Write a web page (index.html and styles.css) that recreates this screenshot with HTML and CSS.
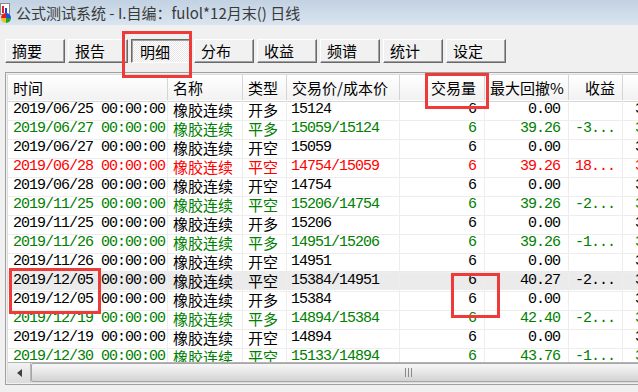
FILE: index.html
```html
<!DOCTYPE html>
<html lang="zh-CN">
<head>
    <meta charset="UTF-8">
    <meta name="viewport" content="width=device-width, initial-scale=1.0">
    <title>公式测试系统</title>
    <link rel="stylesheet" href="styles.css">
</head>
<body>
    <div class="titlebar">
        <svg class="app-icon" width="13" height="20" viewBox="0 0 13 20">
            <rect x="0.5" y="0.5" width="9" height="11" fill="#fff" stroke="#8a8a8a"/>
            <rect x="2" y="3" width="2" height="7" fill="#e02020"/>
            <rect x="5" y="5" width="2" height="5" fill="#2040d0"/>
            <path d="M6 15 L6 10 A5 5 0 0 0 1 15 Z" fill="#e02020"/>
            <path d="M6 15 L11 15 A5 5 0 0 0 6 10 Z" fill="#2050e0"/>
            <path d="M6 15 L6 20 A5 5 0 0 0 11 15 Z" fill="#20a030"/>
            <path d="M6 15 L1 15 A5 5 0 0 0 6 20 Z" fill="#f0c020"/>
        </svg>
        <span class="title">公式测试系统 - I.自编：fulol*12月末() 日线</span>
    </div>

    <div class="tabs">
        <button class="tab">摘要</button>
        <button class="tab">报告</button>
        <button class="tab active">明细</button>
        <button class="tab">分布</button>
        <button class="tab">收益</button>
        <button class="tab">频谱</button>
        <button class="tab">统计</button>
        <button class="tab">设定</button>
    </div>

    <div class="list">
        <div class="list-inner">
            <div class="grid">
                <div class="row head">
                    <div class="cell">时间</div>
                    <div class="cell">名称</div>
                    <div class="cell">类型</div>
                    <div class="cell">交易价/成本价</div>
                    <div class="cell right">交易量</div>
                    <div class="cell right dd">最大回撤%</div>
                    <div class="cell right pl">收益</div>
                    <div class="cell"></div>
                </div>

                <div class="row">
                    <div class="cell mono">2019/06/25 00:00:00</div><div class="cell">橡胶连续</div><div class="cell">开多</div>
                    <div class="cell mono price">15124</div><div class="cell mono right">6</div><div class="cell mono right">0.00</div>
                    <div class="cell mono pl"></div><div class="cell mono last">3</div>
                </div>
                <div class="row green">
                    <div class="cell mono">2019/06/27 00:00:00</div><div class="cell">橡胶连续</div><div class="cell">平多</div>
                    <div class="cell mono price">15059/15124</div><div class="cell mono right">6</div><div class="cell mono right">39.26</div>
                    <div class="cell mono pl">-3...</div><div class="cell mono last">3</div>
                </div>
                <div class="row">
                    <div class="cell mono">2019/06/27 00:00:00</div><div class="cell">橡胶连续</div><div class="cell">开空</div>
                    <div class="cell mono price">15059</div><div class="cell mono right">6</div><div class="cell mono right">0.00</div>
                    <div class="cell mono pl"></div><div class="cell mono last">3</div>
                </div>
                <div class="row red">
                    <div class="cell mono">2019/06/28 00:00:00</div><div class="cell">橡胶连续</div><div class="cell">平空</div>
                    <div class="cell mono price">14754/15059</div><div class="cell mono right">6</div><div class="cell mono right">39.26</div>
                    <div class="cell mono pl">18...</div><div class="cell mono last">3</div>
                </div>
                <div class="row">
                    <div class="cell mono">2019/06/28 00:00:00</div><div class="cell">橡胶连续</div><div class="cell">开空</div>
                    <div class="cell mono price">14754</div><div class="cell mono right">6</div><div class="cell mono right">0.00</div>
                    <div class="cell mono pl"></div><div class="cell mono last">3</div>
                </div>
                <div class="row green">
                    <div class="cell mono">2019/11/25 00:00:00</div><div class="cell">橡胶连续</div><div class="cell">平空</div>
                    <div class="cell mono price">15206/14754</div><div class="cell mono right">6</div><div class="cell mono right">39.26</div>
                    <div class="cell mono pl">-2...</div><div class="cell mono last">3</div>
                </div>
                <div class="row">
                    <div class="cell mono">2019/11/25 00:00:00</div><div class="cell">橡胶连续</div><div class="cell">开多</div>
                    <div class="cell mono price">15206</div><div class="cell mono right">6</div><div class="cell mono right">0.00</div>
                    <div class="cell mono pl"></div><div class="cell mono last">3</div>
                </div>
                <div class="row green">
                    <div class="cell mono">2019/11/26 00:00:00</div><div class="cell">橡胶连续</div><div class="cell">平多</div>
                    <div class="cell mono price">14951/15206</div><div class="cell mono right">6</div><div class="cell mono right">39.26</div>
                    <div class="cell mono pl">-1...</div><div class="cell mono last">3</div>
                </div>
                <div class="row">
                    <div class="cell mono">2019/11/26 00:00:00</div><div class="cell">橡胶连续</div><div class="cell">开空</div>
                    <div class="cell mono price">14951</div><div class="cell mono right">6</div><div class="cell mono right">0.00</div>
                    <div class="cell mono pl"></div><div class="cell mono last">3</div>
                </div>
                <div class="row sel">
                    <div class="cell mono">2019/12/05 00:00:00</div><div class="cell">橡胶连续</div><div class="cell">平空</div>
                    <div class="cell mono price">15384/14951</div><div class="cell mono right">6</div><div class="cell mono right">40.27</div>
                    <div class="cell mono pl">-2...</div><div class="cell mono last">3</div>
                </div>
                <div class="row">
                    <div class="cell mono">2019/12/05 00:00:00</div><div class="cell">橡胶连续</div><div class="cell">开多</div>
                    <div class="cell mono price">15384</div><div class="cell mono right">6</div><div class="cell mono right">0.00</div>
                    <div class="cell mono pl"></div><div class="cell mono last">3</div>
                </div>
                <div class="row green">
                    <div class="cell mono">2019/12/19 00:00:00</div><div class="cell">橡胶连续</div><div class="cell">平多</div>
                    <div class="cell mono price">14894/15384</div><div class="cell mono right">6</div><div class="cell mono right">42.40</div>
                    <div class="cell mono pl">-2...</div><div class="cell mono last">3</div>
                </div>
                <div class="row">
                    <div class="cell mono">2019/12/19 00:00:00</div><div class="cell">橡胶连续</div><div class="cell">开空</div>
                    <div class="cell mono price">14894</div><div class="cell mono right">6</div><div class="cell mono right">0.00</div>
                    <div class="cell mono pl"></div><div class="cell mono last">3</div>
                </div>
                <div class="row green">
                    <div class="cell mono">2019/12/30 00:00:00</div><div class="cell">橡胶连续</div><div class="cell">平空</div>
                    <div class="cell mono price">15133/14894</div><div class="cell mono right">6</div><div class="cell mono right">43.76</div>
                    <div class="cell mono pl">-1...</div><div class="cell mono last">3</div>
                </div>
            </div>

            <div class="hscroll">
                <div class="sb-btn"><span class="sb-arrow"></span></div>
                <div class="sb-thumb"><span class="grip"></span></div>
            </div>
        </div>
    </div>

    <!-- red annotation boxes -->
    <div class="mark mark-tab"></div>
    <div class="mark mark-qty"></div>
    <div class="mark mark-date"></div>
    <div class="mark mark-six"></div>
</body>
</html>
```

FILE: styles.css
```css
* {
    box-sizing: border-box;
}

body {
    margin: 0;
    width: 638px;
    height: 392px;
    overflow: hidden;
    position: relative;
    background-color: #f0f0f0;
    font-family: "Noto Sans CJK SC", sans-serif;
}

.titlebar {
    height: 25px;
    display: flex;
    align-items: center;
    background: linear-gradient(#c2d2e2, #d9e4f0);
}

.app-icon {
    flex: none;
    margin-right: 3px;
}

.title {
    font-size: 15px;
    line-height: 25px;
    color: #3a3a3a;
}

.tabs {
    display: flex;
    gap: 3px;
    padding: 14px 0 0 5px;
}

.tab {
    width: 60px;
    height: 24px;
    margin: 0;
    padding: 0 0 0 6px;
    text-align: left;
    font-family: "Noto Sans CJK SC", sans-serif;
    font-size: 15px;
    line-height: 20px;
    color: #000;
    background-color: #f1f1f1;
    border: 1px solid;
    border-color: #fff #696969 #696969 #fff;
    box-shadow: inset -1px -1px #a0a0a0;
}

.tab.active {
    padding: 1px 0 0 8px;
    border-color: #696969 #fff #fff #696969;
    box-shadow: inset 1px 1px #a0a0a0;
    background: repeating-conic-gradient(#fff 0 25%, #e6e6e6 0 50%) 0 0 / 2px 2px;
}

.list {
    margin: 9px 0 0 5px;
    width: 660px;
    height: 313px;
    padding: 1px;
    border: 1px solid #a0a0a0;
}

.list-inner {
    height: 100%;
    display: flex;
    flex-direction: column;
    overflow: hidden;
    background-color: #fff;
    border: 1px solid #dcdcdc;
}

.grid {
    height: 287px;
    overflow: hidden;
}

.row {
    display: grid;
    grid-template-columns: 160px 75px 44px 113px 85px 84px 54px 90px;
    width: 705px;
    height: 19px;
}

.cell {
    padding: 0 5px;
    white-space: nowrap;
    font-size: 15px;
    line-height: 20px;
    border-right: 1px solid #ededed;
    border-bottom: 1px solid #ededed;
}

.mono {
    font-family: "Liberation Mono", monospace;
    letter-spacing: -1px;
}

.right {
    text-align: right;
    padding-right: 8px;
}

.price {
    padding-left: 4px;
}

.pl {
    padding-left: 6px;
}

.last {
    padding-left: 12px;
}

.row.head {
    height: 25px;
    background: linear-gradient(#ffffff, #f2f2f2);
}

.row.head .cell {
    line-height: 26px;
    border-right: 1px solid #d5d5d5;
    border-bottom: 1px solid #d5d5d5;
}

.row.head .dd {
    padding-right: 6px;
}

.row.head .pl {
    padding-right: 7px;
}

.row.green {
    color: #008000;
}

.row.red {
    color: #ff0000;
}

.row.sel {
    background-color: #ebebeb;
}

.hscroll {
    position: relative;
    height: 20px;
    display: flex;
    overflow: hidden;
    border-top: 1px solid #b4b4b4;
    background: linear-gradient(#f2f2f2, #dcdcdc);
}

.sb-btn {
    flex: none;
    width: 23px;
    display: flex;
    align-items: center;
    justify-content: center;
    border-right: 1px solid #b8b8b8;
}

.sb-arrow {
    width: 0;
    height: 0;
    border-top: 4px solid transparent;
    border-bottom: 4px solid transparent;
    border-right: 5px solid #404040;
}

.sb-thumb {
    flex: none;
    width: 754px;
    display: flex;
    align-items: center;
    justify-content: center;
    border: 1px solid #a6a6a6;
    border-radius: 2px;
    background: linear-gradient(#f7f7f7, #e8e8e8 45%, #d2d2d2);
}

.grip {
    width: 7px;
    height: 9px;
    border-left: 1px solid #8a8a8a;
    border-right: 1px solid #8a8a8a;
    background: linear-gradient(90deg, transparent 2px, #8a8a8a 2px, #8a8a8a 3px, transparent 3px);
}

/* annotation overlays */
.mark {
    position: absolute;
    border: 3px solid #ef3a3a;
}

.mark-tab {
    left: 122px;
    top: 31px;
    width: 70px;
    height: 47px;
}

.mark-qty {
    left: 425px;
    top: 73px;
    width: 64px;
    height: 36px;
}

.mark-date {
    left: 9px;
    top: 268px;
    width: 92px;
    height: 46px;
}

.mark-six {
    left: 451px;
    top: 273px;
    width: 49px;
    height: 45px;
}
```
